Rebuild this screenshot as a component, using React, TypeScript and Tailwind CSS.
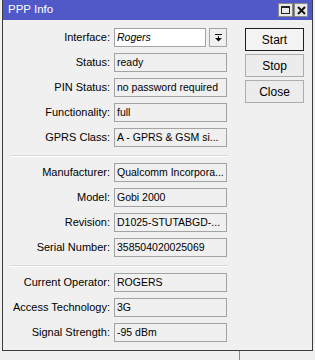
import React from "react";

const Field = ({ label, value, italic = false }: { label: string; value: string; italic?: boolean }) => (
  <div className="flex items-center h-[19px]">
    <div className="w-[107px] text-right whitespace-nowrap">{label}</div>
    <div className="ml-[4px] w-[113px] h-[19px] border border-[#a3a3a3] bg-[#f0f0f0] pl-[2px] flex items-center whitespace-nowrap overflow-hidden text-[10.5px]">
      <span className={italic ? "italic" : ""}>{value}</span>
    </div>
  </div>
);

const Sep = () => (
  <div className="h-[16px] pt-[8px] pl-[7px]">
    <div className="w-[218px] border-t border-[#d9d9d9] border-b border-b-white" />
  </div>
);

export default function App() {
  return (
    <div className="w-[315px] h-[360px] bg-[#f0f0f0] overflow-hidden text-[11px] text-black font-['Liberation_Sans',Arial,sans-serif]">
      <div className="ml-[2px] w-[311px] h-[351px] border-x border-b border-[#3c3c3c] bg-[#f0f0f0] flex flex-col">
        <div className="h-[20px] bg-[#5159c9] flex items-center pl-[5px] pr-[4px] text-white text-[11.5px]">
          <span className="flex-1">PPP Info</span>
          <div className="flex gap-[1px]">
            <div className="w-[15px] h-[14px] bg-[#e9e9e9] border border-[#8a8a8a] flex items-center justify-center">
              <div className="w-[9px] h-[8px] border border-[#222] border-t-2" />
            </div>
            <div className="w-[14px] h-[14px] bg-[#e9e9e9] border border-[#8a8a8a] flex items-center justify-center">
              <svg width="9" height="9" viewBox="0 0 9 9">
                <path d="M1 1 L8 8 M8 1 L1 8" stroke="#111" strokeWidth="2" />
              </svg>
            </div>
          </div>
        </div>
        <div className="flex pt-[8px]">
          <div className="flex flex-col">
            <div className="flex flex-col gap-[6px]">
              <div className="flex items-center h-[19px]">
                <div className="w-[107px] text-right">Interface:</div>
                <div className="ml-[4px] w-[92px] h-[19px] border border-[#a3a3a3] bg-white pl-[2px] flex items-center text-[10.5px]">
                  <span className="italic">Rogers</span>
                </div>
                <div className="ml-[3px] w-[18px] h-[19px] border border-[#a3a3a3] bg-[#f0f0f0] flex items-center justify-center">
                  <svg width="7" height="8" viewBox="0 0 7 8">
                    <rect x="0" y="0" width="7" height="1" fill="#111" />
                    <rect x="3" y="2" width="1" height="2" fill="#111" />
                    <path d="M0 4 L7 4 L3.5 7.5 Z" fill="#111" />
                  </svg>
                </div>
              </div>
              <Field label="Status:" value="ready" />
              <Field label="PIN Status:" value="no password required" />
              <Field label="Functionality:" value="full" />
              <Field label="GPRS Class:" value="A - GPRS & GSM si..." />
            </div>
            <Sep />
            <div className="flex flex-col gap-[6px]">
              <Field label="Manufacturer:" value="Qualcomm Incorpora..." />
              <Field label="Model:" value="Gobi 2000" />
              <Field label="Revision:" value="D1025-STUTABGD-..." />
              <Field label="Serial Number:" value="358504020025069" />
            </div>
            <Sep />
            <div className="flex flex-col gap-[6px]">
              <Field label="Current Operator:" value="ROGERS" />
              <Field label="Access Technology:" value="3G" />
              <Field label="Signal Strength:" value="-95 dBm" />
            </div>
          </div>
          <div className="ml-[17px] flex flex-col gap-[3px]">
            <button className="w-[59px] h-[23px] border border-[#1e1e1e] bg-[#f3f3f3] text-[12px]">Start</button>
            <button className="w-[59px] h-[23px] border border-[#adadad] bg-[#ececec] text-[12px]">Stop</button>
            <button className="w-[59px] h-[23px] border border-[#adadad] bg-[#ececec] text-[12px]">Close</button>
          </div>
        </div>
      </div>
      <div className="ml-[239px] h-[9px] border-l border-[#8a8a8a]" />
    </div>
  );
}
